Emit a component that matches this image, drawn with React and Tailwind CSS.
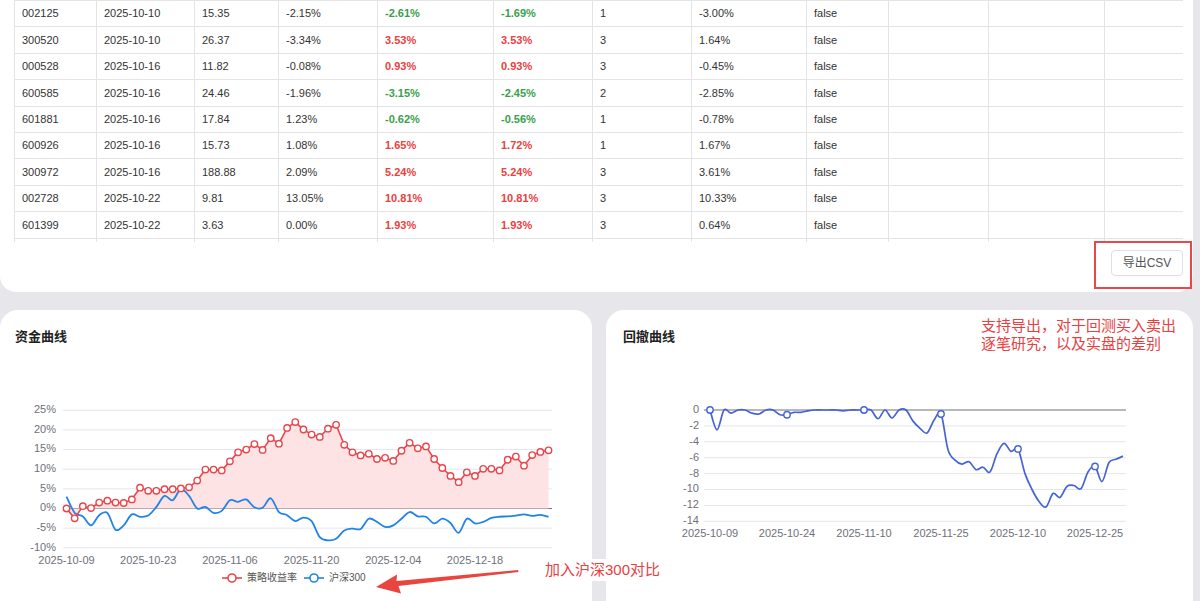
import React from 'react'

const rows = [
    ['002125', '2025-10-10', '15.35', '-2.15%', '-2.61%', '-1.69%', '1', '-3.00%', 'false'],
    ['300520', '2025-10-10', '26.37', '-3.34%', '3.53%', '3.53%', '3', '1.64%', 'false'],
    ['000528', '2025-10-16', '11.82', '-0.08%', '0.93%', '0.93%', '3', '-0.45%', 'false'],
    ['600585', '2025-10-16', '24.46', '-1.96%', '-3.15%', '-2.45%', '2', '-2.85%', 'false'],
    ['601881', '2025-10-16', '17.84', '1.23%', '-0.62%', '-0.56%', '1', '-0.78%', 'false'],
    ['600926', '2025-10-16', '15.73', '1.08%', '1.65%', '1.72%', '1', '1.67%', 'false'],
    ['300972', '2025-10-16', '188.88', '2.09%', '5.24%', '5.24%', '3', '3.61%', 'false'],
    ['002728', '2025-10-22', '9.81', '13.05%', '10.81%', '10.81%', '3', '10.33%', 'false'],
    ['601399', '2025-10-22', '3.63', '0.00%', '1.93%', '1.93%', '3', '0.64%', 'false'],
    // next row is only a sliver under the scroll edge
    ['', '', '', '', '', '', '', '', ''],
]

// strategy return % per trading day
const strat = [0, -2.5, 0.6, 0.1, 1.5, 2.0, 1.5, 1.4, 2.3, 5.3, 4.5, 4.5, 4.9, 4.9, 5.1, 5.4, 7.1, 9.9, 9.9, 9.7,
    12.0, 14.3, 15.0, 16.4, 14.9, 17.9, 16.5, 20.5, 22.0, 20.1, 18.8, 18.2, 20.3, 21.3, 16.2, 14.3, 13.5, 13.9, 12.6, 12.9,
    12.1, 14.7, 16.7, 15.3, 15.8, 12.6, 10.3, 8.3, 6.7, 9.2, 8.3, 10.1, 10.1, 9.7, 12.4, 13.2, 10.9, 13.6, 14.4, 14.8]

// hs300 return %
const hs300 = [3.0, -1.1, -2.0, -4.3, -1.7, -1.1, -5.4, -4.3, -1.5, -2.1, -1.8, 0.4, 3.2, 2.1, 4.9, 3.2, 0, 0.4, -1.1, -0.6,
    2.1, 1.7, 2.3, 0.3, 0.2, 2.6, -0.9, -1.7, -3.2, -2.3, -3.2, -7.3, -8.1, -7.7, -5.6, -5.1, -5.2, -2.6, -3.4, -4.7,
    -4.3, -2.6, -0.9, -2.0, -2.1, -3.8, -2.6, -3.7, -6.2, -2.6, -3.8, -3.4, -2.4, -2.1, -2.0, -1.8, -1.5, -1.9, -1.6, -2.1]

// drawdown
const dd = [0, -2.5, 0, -0.4, 0, 0, -0.4, -0.5, 0, 0, -0.6, -0.6, -0.3, -0.3, -0.1, 0, 0, 0, 0, -0.1,
    0, 0, 0, 0, -1.1, 0, -1.0, 0, 0, -1.4, -2.3, -2.9, -1.3, -0.5, -5.0, -6.3, -6.8, -6.5, -7.5, -7.2,
    -7.8, -5.5, -4.2, -5.2, -4.9, -8.0, -10.0, -11.5, -12.2, -10.5, -11.0, -9.6, -9.5, -9.9, -7.8, -7.1, -9.0, -6.6, -6.2, -5.8]

const smoothPath = (pts) => {
    let d = `M${pts[0][0]},${pts[0][1]}`
    for (let i = 0; i < pts.length - 1; i++) {
        const p0 = pts[i - 1] || pts[i]
        const p1 = pts[i]
        const p2 = pts[i + 1]
        const p3 = pts[i + 2] || p2
        const c1x = p1[0] + (p2[0] - p0[0]) / 6
        const c1y = p1[1] + (p2[1] - p0[1]) / 6
        const c2x = p2[0] - (p3[0] - p1[0]) / 6
        const c2y = p2[1] - (p3[1] - p1[1]) / 6
        d += ` C${c1x},${c1y} ${c2x},${c2y} ${p2[0]},${p2[1]}`
    }
    return d
}

const EquityChart = () => {
    const lx = (i) => 66.5 + i * 8.17
    const ly = (v) => 508.5 - v * 3.93
    const sp = strat.map((v, i) => [lx(i), ly(v)])
    const hp = hs300.map((v, i) => [lx(i), ly(v)])
    const line = sp.map((p, i) => `${i ? 'L' : 'M'}${p[0]},${p[1]}`).join(' ')
    const area = `${line} L${lx(59)},${ly(0)} L${lx(0)},${ly(0)} Z`
    const ticks = [25, 20, 15, 10, 5, 0, -5, -10]
    const labels = ['2025-10-09', '2025-10-23', '2025-11-06', '2025-11-20', '2025-12-04', '2025-12-18']

    return (
        <svg width="592" height="254" viewBox="0 347 592 254" className="block">
            {ticks.map((t) => (
                <g key={t}>
                    <line x1="63" x2="552" y1={ly(t)} y2={ly(t)} stroke={t === 0 ? '#6e7079' : '#e3e6ec'} strokeWidth="1" />
                    <text x="56" y={ly(t)} textAnchor="end" dominantBaseline="middle" fontSize="11" fill="#6e7079">{t}%</text>
                </g>
            ))}
            {labels.map((l, k) => (
                <text key={l} x={lx(k * 10)} y="561" textAnchor="middle" dominantBaseline="middle" fontSize="11" fill="#6e7079">{l}</text>
            ))}
            <path d={area} fill="#fde3e3" />
            <path d={smoothPath(hp)} fill="none" stroke="#2083e8" strokeWidth="1.8" />
            <path d={line} fill="none" stroke="#e8464b" strokeWidth="1.6" />
            {sp.map((p, i) => (
                <circle key={i} cx={p[0]} cy={p[1]} r="3.2" fill="#fff" stroke="#e8464b" strokeWidth="1.4" />
            ))}
            <line x1="222" x2="242" y1="578" y2="578" stroke="#e8464b" strokeWidth="1.6" />
            <circle cx="232" cy="578" r="4" fill="#fff" stroke="#e8464b" strokeWidth="1.6" />
            <text x="247" y="578" dominantBaseline="middle" fontSize="10" fill="#555">策略收益率</text>
            <line x1="304" x2="324" y1="578" y2="578" stroke="#2083e8" strokeWidth="1.6" />
            <circle cx="314" cy="578" r="4" fill="#fff" stroke="#2083e8" strokeWidth="1.6" />
            <text x="329" y="578" dominantBaseline="middle" fontSize="10" fill="#555">沪深300</text>
        </svg>
    )
}

const DrawdownChart = () => {
    const rx = (i) => 710 + i * 7
    const ry = (v) => 410 - v * 7.95
    const pts = dd.map((v, i) => [rx(i), ry(v)])
    const ticks = [0, -2, -4, -6, -8, -10, -12, -14]
    const labels = ['2025-10-09', '2025-10-24', '2025-11-10', '2025-11-25', '2025-12-10', '2025-12-25']

    return (
        <svg width="587" height="254" viewBox="606 347 587 254" className="block">
            {ticks.map((t) => (
                <g key={t}>
                    <line x1="704" x2="1126" y1={ry(t)} y2={ry(t)} stroke={t === 0 ? '#6e7079' : '#e3e6ec'} strokeWidth="1" />
                    <text x="699" y={ry(t)} textAnchor="end" dominantBaseline="middle" fontSize="11" fill="#6e7079">{t}</text>
                </g>
            ))}
            {labels.map((l, k) => (
                <text key={l} x={rx(k * 11)} y="534" textAnchor="middle" dominantBaseline="middle" fontSize="11" fill="#6e7079">{l}</text>
            ))}
            <path d={smoothPath(pts)} fill="none" stroke="#4563d4" strokeWidth="1.7" />
            {[0, 11, 22, 33, 44, 55].map((i) => (
                <circle key={i} cx={pts[i][0]} cy={pts[i][1]} r="3.2" fill="#fff" stroke="#4563d4" strokeWidth="1.4" />
            ))}
        </svg>
    )
}

const App = () => {
    return (
        <div className="relative w-[1200px] h-[601px] overflow-hidden bg-[#e7e7eb] pr-[7px] flex flex-col font-['Liberation_Sans','Noto_Sans_CJK_SC',sans-serif]">
            <div className="bg-white rounded-b-[16px] h-[292px] shrink-0 pl-[14px] pr-[10px]">
                <div className="h-[242px] overflow-hidden">
                    <div className="border-t border-l border-[#e4e4e4]">
                        {rows.map((r, ri) => (
                            <div key={ri} className="grid grid-cols-[82px_98px_84px_99px_116px_99px_99px_115px_82px_100px_116px_79px] h-[26.4px]">
                                {[...r, '', '', ''].map((c, ci) => (
                                    <div
                                        key={ci}
                                        className={`border-r border-b border-[#e4e4e4] pl-[7px] flex items-center text-[11px] ${ci === 4 || ci === 5 ? (c.startsWith('-') ? 'text-[#3a9f4b] font-semibold' : 'text-[#ea4141] font-semibold') : 'text-[#333]'}`}
                                    >
                                        {c}
                                    </div>
                                ))}
                            </div>
                        ))}
                    </div>
                </div>
                <div className="flex justify-end pt-[8px]">
                    <button className="w-[72px] h-[26px] border border-[#dcdfe6] rounded-[4px] bg-white text-[12px] text-[#555]">导出CSV</button>
                </div>
            </div>

            <div className="flex gap-[14px] mt-[18px] flex-1">
                <div className="w-[592px] shrink-0 bg-white rounded-t-[18px]">
                    <div className="pt-[17px] pl-[15px] text-[13px] leading-[20px] font-semibold text-[#1f1f1f]">资金曲线</div>
                    <EquityChart />
                </div>
                <div className="relative flex-1 bg-white rounded-t-[18px]">
                    <div className="pt-[17px] pl-[17px] text-[13px] leading-[20px] font-semibold text-[#1f1f1f]">回撤曲线</div>
                    <div className="absolute left-[375px] top-[7px] text-[15px] leading-[18px] text-[#e8403f]">
                        <p>支持导出，对于回测买入卖出</p>
                        <p>逐笔研究，以及实盘的差别</p>
                    </div>
                    <DrawdownChart />
                </div>
            </div>

            {/* annotations */}
            <div className="absolute left-[1094px] top-[241px] w-[98px] h-[48px] border-[2.5px] border-[#e94848]" />
            <div className="absolute left-[541px] top-[559px] bg-white px-[4px] text-[15px] leading-[22px] text-[#e8403f]">加入沪深300对比</div>
            <svg className="absolute left-0 top-0 pointer-events-none" width="1200" height="601" viewBox="0 0 1200 601">
                <polygon points="376,587 397,574.5 396.5,581 518,570 518.5,572 398.5,586 401,593.5" fill="#e8453f" />
            </svg>
        </div>
    )
}

export default App
